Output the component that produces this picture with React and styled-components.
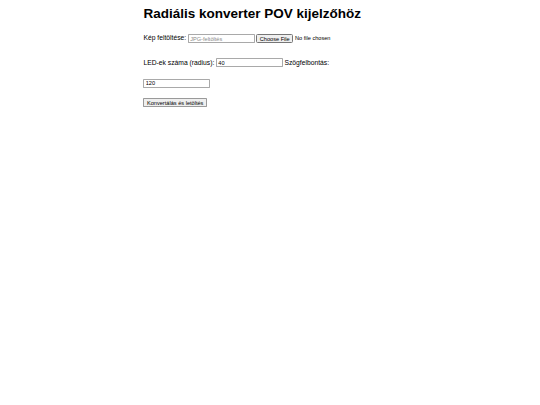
import React from 'react'
import styled, { createGlobalStyle } from 'styled-components'

const GlobalStyle = createGlobalStyle`
html, body {
    margin: 0;
    padding: 0;
    background: #ffffff;
}
`

// the reference is a 1280px page photographed at 540px
const Page = styled.div`
width: 1280px;
zoom: 0.421875;
font-family: "Liberation Sans", Arial, sans-serif;
font-size: 16px;
color: #000;
padding: 1px 0;
`

const Container = styled.div`
max-width: 600px;
margin: 0 auto;
`

const Title = styled.h1`
font-size: 32px;
font-weight: bold;
margin: 14px 0 0;
line-height: 37px;
`

const Row = styled.div`
margin-top: ${p => p.gap}px;
line-height: 21px;
white-space: nowrap;
`

const Label = styled.label`
margin-right: 4px;
`

const TextField = styled.input`
box-sizing: border-box;
width: 158px;
height: 21px;
padding: 1px 3px;
margin: 0 4px 0 0;
border: 1px solid #a9a9a9;
border-radius: 2px;
font-family: "Liberation Sans", Arial, sans-serif;
font-size: 13.33px;
vertical-align: middle;

&::placeholder {
    color: #8a8a8a;
}
`

const FileField = styled.input`
font-family: "Liberation Sans", Arial, sans-serif;
font-size: 13.33px;
vertical-align: middle;
margin: 0;
`

const Button = styled.button`
font-family: "Liberation Sans", Arial, sans-serif;
font-size: 13.33px;
padding: 1px 6px;
height: 21px;
border: 1px solid #9a9a9a;
border-radius: 2px;
background: #efefef;
color: #000;
`

const App = () => {
    return (
        <Page>
            <GlobalStyle />
            <Container>
                <Title>Radiális konverter POV kijelzőhöz</Title>
                <Row gap={29}>
                    <Label>Kép feltöltése:</Label>
                    <TextField type="text" placeholder="JPG-feltöltés" />
                    <FileField type="file" accept="image/jpeg" />
                </Row>
                <Row gap={36}>
                    <Label>LED-ek száma (radius):</Label>
                    <TextField type="text" defaultValue="40" />
                    <Label>Szögfelbontás:</Label>
                </Row>
                <Row gap={27}>
                    <TextField type="text" defaultValue="120" />
                </Row>
                <Row gap={24}>
                    <Button>Konvertálás és letöltés</Button>
                </Row>
            </Container>
        </Page>
    )
}

export default App
